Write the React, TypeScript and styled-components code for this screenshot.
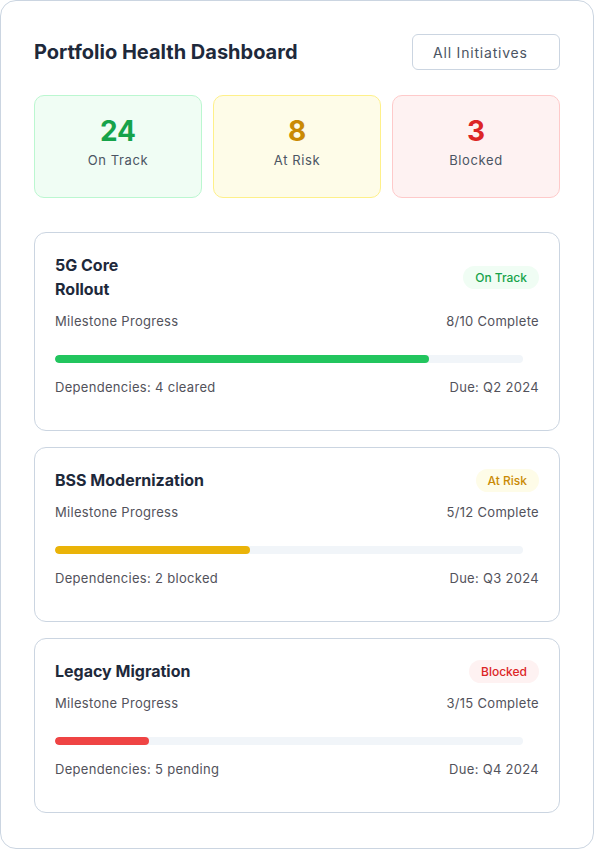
import React from "react";
import styled, { createGlobalStyle } from "styled-components";

const Global = createGlobalStyle`
  html, body { margin: 0; padding: 0; background: #ffffff; }
  body { font-family: Inter, "Noto Sans", sans-serif; }
  * { box-sizing: border-box; }
`;

type Tone = "green" | "yellow" | "red";

const tones: Record<Tone, { bg: string; border: string; text: string; fill: string }> = {
  green: { bg: "#f0fdf4", border: "#bbf7d0", text: "#16a34a", fill: "#22c55e" },
  yellow: { bg: "#fefce8", border: "#fef08a", text: "#ca8a04", fill: "#eab308" },
  red: { bg: "#fef2f2", border: "#fecaca", text: "#dc2626", fill: "#ef4444" },
};

const Panel = styled.div`
  width: 594px;
  min-height: 849px;
  border: 1px solid #cbd5e1;
  border-radius: 16px;
  padding: 33px;
  background: #ffffff;
`;

const Header = styled.div`
  display: flex;
  align-items: center;
  justify-content: space-between;
  height: 36px;
  margin-bottom: 25px;
`;

const Title = styled.h1`
  margin: 0;
  font-size: 20px;
  line-height: 28px;
  font-weight: 700;
  color: #1e293b;
`;

const Filter = styled.button`
  width: 148px;
  height: 36px;
  border: 1px solid #cbd5e1;
  border-radius: 6px;
  background: #ffffff;
  padding: 0 20px;
  text-align: left;
  font-family: inherit;
  font-size: 14px;
  color: #4b5563;
  letter-spacing: 0.8px;
`;

const Stats = styled.div`
  display: grid;
  grid-template-columns: repeat(3, 1fr);
  gap: 11px;
  margin-bottom: 34px;
`;

const StatCard = styled.div<{ $tone: Tone }>`
  height: 103px;
  border: 1px solid ${(p) => tones[p.$tone].border};
  background: ${(p) => tones[p.$tone].bg};
  border-radius: 10px;
  padding-top: 18px;
  display: flex;
  flex-direction: column;
  align-items: center;
`;

const StatNumber = styled.div<{ $tone: Tone }>`
  font-size: 28px;
  line-height: 34px;
  font-weight: 700;
  color: ${(p) => tones[p.$tone].text};
`;

const StatLabel = styled.div`
  margin-top: 2px;
  font-size: 13px;
  line-height: 20px;
  color: #4b5563;
  letter-spacing: 0.6px;
`;

const List = styled.div`
  display: flex;
  flex-direction: column;
  gap: 16px;
`;

const Card = styled.div`
  border: 1px solid #cbd5e1;
  border-radius: 12px;
  padding: 20px 20px 33px 20px;
  background: #ffffff;
`;

const CardHead = styled.div`
  display: flex;
  align-items: center;
  justify-content: space-between;
  margin-bottom: 10px;
`;

const CardTitle = styled.h2`
  margin: 0;
  font-size: 16px;
  line-height: 24px;
  font-weight: 700;
  color: #1e293b;
  white-space: pre-line;
`;

const Badge = styled.span<{ $tone: Tone }>`
  display: inline-flex;
  align-items: center;
  height: 23px;
  padding: 0 12px;
  border-radius: 12px;
  background: ${(p) => tones[p.$tone].bg};
  color: ${(p) => tones[p.$tone].text};
  font-size: 12px;
  font-weight: 500;
`;

const Row = styled.div<{ $gap: number }>`
  display: flex;
  justify-content: space-between;
  font-size: 13px;
  line-height: 20px;
  color: #52525b;
  letter-spacing: 0.3px;
  margin-bottom: ${(p) => p.$gap}px;
`;

const Track = styled.div`
  height: 8px;
  margin-right: 16px;
  border-radius: 4px;
  background: #f1f5f9;
  overflow: hidden;
  margin-bottom: 14px;
`;

const Fill = styled.div<{ $tone: Tone }>`
  height: 100%;
  border-radius: 4px;
  background: ${(p) => tones[p.$tone].fill};
`;

const initiatives: {
  name: string;
  status: string;
  tone: Tone;
  done: number;
  total: number;
  deps: string;
  due: string;
}[] = [
  { name: "5G Core\nRollout", status: "On Track", tone: "green", done: 8, total: 10, deps: "4 cleared", due: "Q2 2024" },
  { name: "BSS Modernization", status: "At Risk", tone: "yellow", done: 5, total: 12, deps: "2 blocked", due: "Q3 2024" },
  { name: "Legacy Migration", status: "Blocked", tone: "red", done: 3, total: 15, deps: "5 pending", due: "Q4 2024" },
];

export default function App() {
  return (
    <>
      <Global />
      <Panel>
        <Header>
          <Title>Portfolio Health Dashboard</Title>
          <Filter>All Initiatives</Filter>
        </Header>
        <Stats>
          <StatCard $tone="green">
            <StatNumber $tone="green">24</StatNumber>
            <StatLabel>On Track</StatLabel>
          </StatCard>
          <StatCard $tone="yellow">
            <StatNumber $tone="yellow">8</StatNumber>
            <StatLabel>At Risk</StatLabel>
          </StatCard>
          <StatCard $tone="red">
            <StatNumber $tone="red">3</StatNumber>
            <StatLabel>Blocked</StatLabel>
          </StatCard>
        </Stats>
        <List>
          {initiatives.map((it) => (
            <Card key={it.name}>
              <CardHead>
                <CardTitle>{it.name}</CardTitle>
                <Badge $tone={it.tone}>{it.status}</Badge>
              </CardHead>
              <Row $gap={24}>
                <span>Milestone Progress</span>
                <span>
                  {it.done}/{it.total} Complete
                </span>
              </Row>
              <Track>
                <Fill $tone={it.tone} style={{ width: `${(it.done / it.total) * 100}%` }} />
              </Track>
              <Row $gap={0}>
                <span>Dependencies: {it.deps}</span>
                <span>Due: {it.due}</span>
              </Row>
            </Card>
          ))}
        </List>
      </Panel>
    </>
  );
}
